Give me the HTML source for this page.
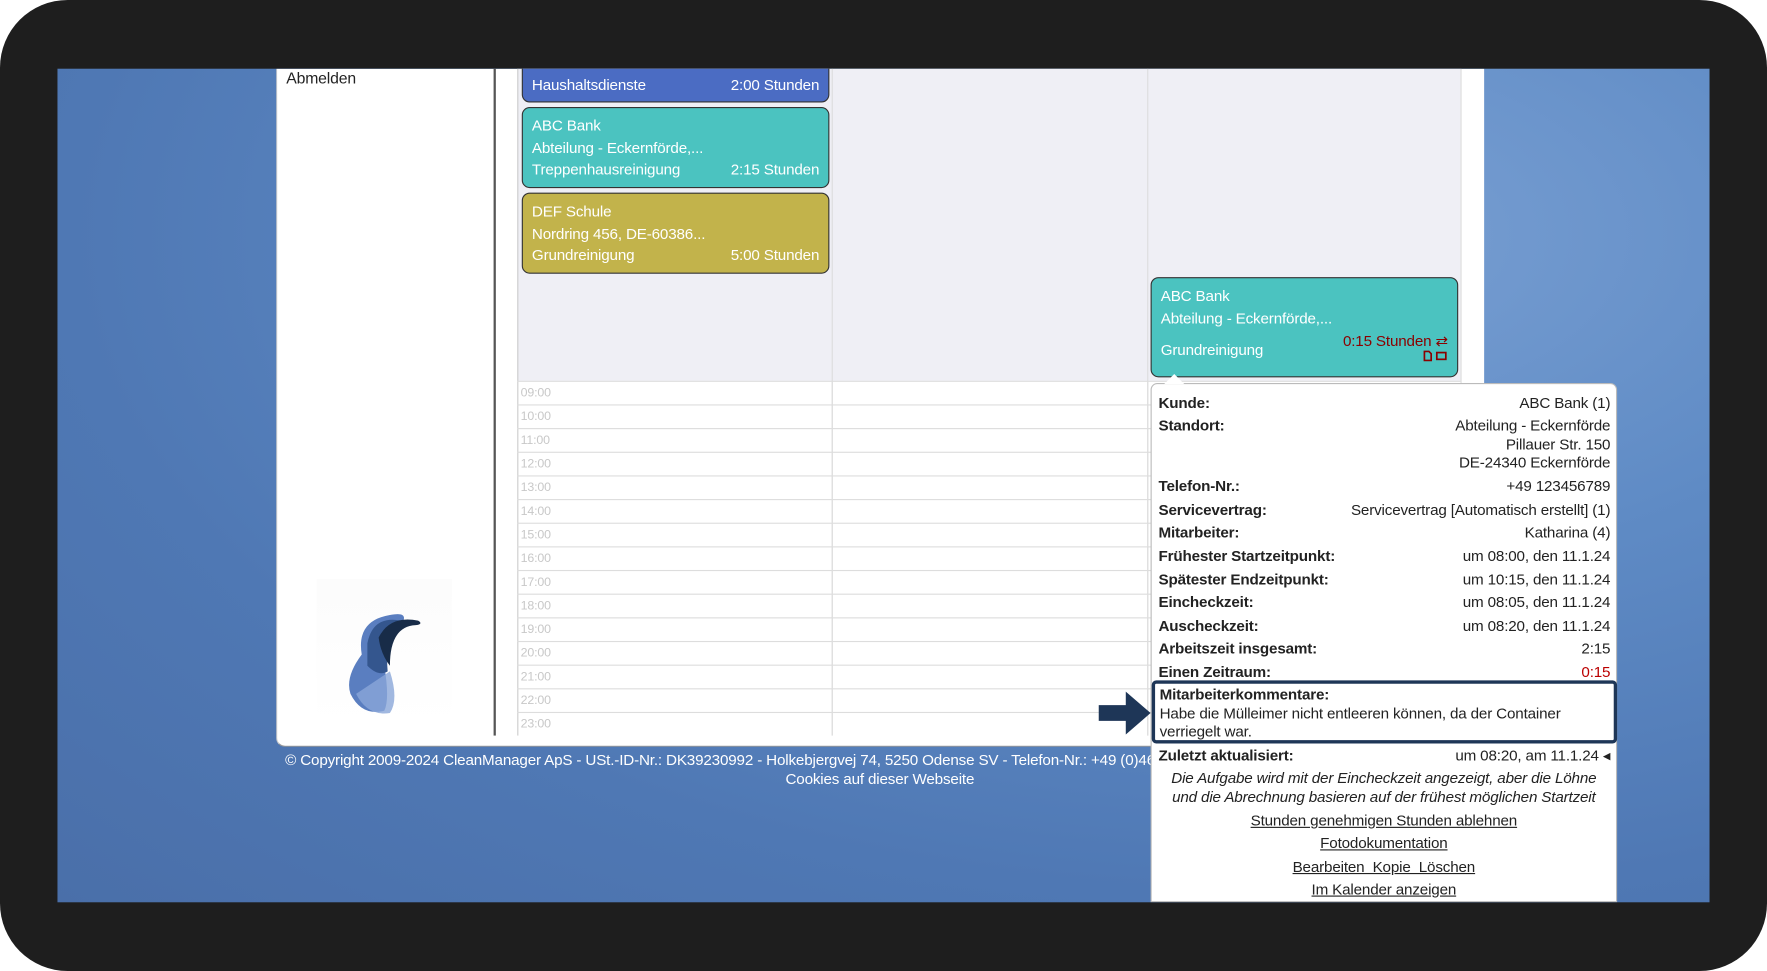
<!DOCTYPE html>
<html><head><meta charset="utf-8"><style>
*{margin:0;padding:0;box-sizing:border-box}
html,body{width:1767px;height:971px;overflow:hidden;background:#fff}
#s{position:absolute;left:0;top:0;width:1568px;height:862px;transform:scale(1.12691,1.12645);transform-origin:0 0;font-family:"Liberation Sans",sans-serif;letter-spacing:-0.15px}
.frame{position:absolute;left:0;top:0;width:1568px;height:862px;background:#1e1e1e;border-radius:60px;}
.blue{position:absolute;left:51px;top:61px;width:1466px;height:740px;background:radial-gradient(ellipse at 75% 20%,#7aa0d3 0%,#5f8bc5 35%,#4f78b4 70%,#4a6fa9 100%);overflow:hidden}
.a{position:absolute}
.panel{left:194px;top:0;width:1072px;height:602px;background:#fff;border-radius:0 0 0 8px;border-left:1px solid #ccc;border-bottom:1px solid #999}
.ev{position:absolute;border:1px solid #333;border-radius:7px;color:#fff;font-size:13.5px;padding:6px 8px;line-height:19.5px}
.ev .r{position:absolute;right:8px}
.tr{position:absolute;left:408px;width:837px;height:21px;border-top:1px solid #ddd;font-size:11px;color:#c8c8c8;padding:4px 3px}
.pop{left:970px;top:279px;width:414px;height:461px;background:#fff;border:1px solid #bbb;border-radius:6px 6px 0 0;font-size:13.5px;color:#222}
.row{position:absolute;left:6px;right:5px;height:20px}
.row b{position:absolute;left:0}
.row span{position:absolute;right:0;text-align:right}
.lk{position:absolute;left:0;width:100%;text-align:center;text-decoration:underline;color:#222}
</style></head><body><div id="s">
<div class="frame"></div>
<div class="blue">
 <div class="a panel"></div>
 <div class="a" style="left:203px;top:0;font-size:14px;color:#222">Abmelden</div>
 <div class="a" style="left:387px;top:0;width:2px;height:592px;background:#555"></div>
 <div class="a" style="left:408px;top:0;width:837px;height:277px;background:#efeff5"></div>
 <div class="a" style="left:408px;top:0;width:1px;height:592px;background:#ccc"></div>
 <div class="a" style="left:687px;top:0;width:1px;height:592px;background:#ddd"></div>
 <div class="a" style="left:967px;top:0;width:1px;height:592px;background:#ddd"></div>
 <div class="a" style="left:1245px;top:0;width:1px;height:592px;background:#ddd"></div>
 <div class="tr" style="top:277px">09:00</div><div class="tr" style="top:298px">10:00</div><div class="tr" style="top:319px">11:00</div><div class="tr" style="top:340px">12:00</div><div class="tr" style="top:361px">13:00</div><div class="tr" style="top:382px">14:00</div><div class="tr" style="top:403px">15:00</div><div class="tr" style="top:424px">16:00</div><div class="tr" style="top:445px">17:00</div><div class="tr" style="top:466px">18:00</div><div class="tr" style="top:487px">19:00</div><div class="tr" style="top:508px">20:00</div><div class="tr" style="top:529px">21:00</div><div class="tr" style="top:550px">22:00</div><div class="tr" style="top:571px">23:00</div>
 <div class="a" style="left:687px;top:277px;width:1px;height:315px;background:#ddd"></div>
 <div class="a" style="left:967px;top:277px;width:1px;height:315px;background:#ddd"></div>
 <div class="ev" style="left:412px;top:-12px;width:273px;height:42px;background:#4b6cc3;padding-top:16px">Haushaltsdienste<span class="r">2:00 Stunden</span></div>
 <div class="ev" style="left:412px;top:34px;width:273px;height:72px;background:#4bc3c0">ABC Bank<br>Abteilung - Eckernförde,...<br>Treppenhausreinigung<span class="r">2:15 Stunden</span></div>
 <div class="ev" style="left:412px;top:110px;width:273px;height:72px;background:#c2b34b">DEF Schule<br>Nordring 456, DE-60386...<br>Grundreinigung<span class="r">5:00 Stunden</span></div>
 <div class="ev" style="left:970px;top:185px;width:273px;height:89px;background:#4bc3c0">ABC Bank<br>Abteilung - Eckernförde,...<br><span style="position:absolute;left:8px;top:54px">Grundreinigung</span><span class="r" style="top:46px;color:#8b0000">0:15 Stunden ⇄</span>
  <svg class="a" style="right:8px;top:64px" width="22" height="10" viewBox="0 0 22 10"><path d="M1 1H5L7 3V9H1Z" fill="none" stroke="#8b0000" stroke-width="1.5"/><rect x="12" y="2" width="8" height="6" fill="none" stroke="#8b0000" stroke-width="1.5"/></svg></div>
 <div class="a" style="left:230px;top:453px;width:120px;height:132px;background:linear-gradient(#fcfcfc,#fff)"></div>
 <div class="a" style="left:235px;top:460px;width:120px;height:130px">
  <svg width="120" height="130" viewBox="0 0 120 130"><path d="M35 60 Q30 30 60 25 Q75 22 72 30 Q50 35 55 70 Q60 100 55 110 Q35 115 25 95 Q20 80 35 60Z" fill="#5a7ec0"/><path d="M40 50 Q45 25 70 30 Q55 40 58 75 Q50 80 40 70Z" fill="#34568e"/><path d="M50 45 Q60 25 85 30 Q90 33 83 34 Q60 35 60 70 Q52 60 50 45Z" fill="#182c48"/><path d="M30 95 Q45 85 60 75 Q68 100 60 112 Q40 115 30 95Z" fill="#8aa6d8" opacity=".8"/></svg>
 </div>
 <div class="a" style="left:0;top:605px;width:1458px;color:#fff;font-size:13.5px;line-height:17px;letter-spacing:-0.15px"><div style="position:absolute;left:202px;white-space:nowrap">© Copyright 2009-2024 CleanManager ApS - USt.-ID-Nr.: DK39230992 - Holkebjergvej 74, 5250 Odense SV - Telefon-Nr.: +49 (0)4621 123456</div><div style="position:absolute;left:646px;top:17px">Cookies auf dieser Webseite</div></div>
 <div class="a pop">
  <div class="row" style="top:9px"><b>Kunde:</b><span>ABC Bank (1)</span></div>
  <div class="row" style="top:29px;height:60px"><b>Standort:</b><span style="line-height:16.5px">Abteilung - Eckernförde<br>Pillauer Str. 150<br>DE-24340 Eckernförde</span></div>
  <div class="row" style="top:83px"><b>Telefon-Nr.:</b><span>+49 123456789</span></div>
  <div class="row" style="top:104px"><b>Servicevertrag:</b><span>Servicevertrag [Automatisch erstellt] (1)</span></div>
  <div class="row" style="top:124px"><b>Mitarbeiter:</b><span>Katharina (4)</span></div>
  <div class="row" style="top:145px"><b>Frühester Startzeitpunkt:</b><span>um 08:00, den 11.1.24</span></div>
  <div class="row" style="top:166px"><b>Spätester Endzeitpunkt:</b><span>um 10:15, den 11.1.24</span></div>
  <div class="row" style="top:186px"><b>Eincheckzeit:</b><span>um 08:05, den 11.1.24</span></div>
  <div class="row" style="top:207px"><b>Auscheckzeit:</b><span>um 08:20, den 11.1.24</span></div>
  <div class="row" style="top:227px"><b>Arbeitszeit insgesamt:</b><span>2:15</span></div>
  <div class="row" style="top:248px"><b>Einen Zeitraum:</b><span style="color:#b00">0:15</span></div>
  <div class="a" style="left:0;top:263px;width:413px;height:56px;border:3px solid #1e3657;border-radius:4px;padding:2px 4px;line-height:16.5px;font-size:13.5px"><b>Mitarbeiterkommentare:</b><br>Habe die Mülleimer nicht entleeren können, da der Container verriegelt war.</div>
  <div class="row" style="top:322px"><b>Zuletzt aktualisiert:</b><span>um 08:20, am 11.1.24 ◂</span></div>
  <div class="a" style="left:0;top:341px;width:100%;text-align:center;font-style:italic;line-height:17px">Die Aufgabe wird mit der Eincheckzeit angezeigt, aber die Löhne<br>und die Abrechnung basieren auf der frühest möglichen Startzeit</div>
  <div class="lk" style="top:380px">Stunden genehmigen Stunden ablehnen</div>
  <div class="lk" style="top:400px">Fotodokumentation</div>
  <div class="lk" style="top:421px">Bearbeiten&nbsp; Kopie&nbsp; Löschen</div>
  <div class="lk" style="top:441px">Im Kalender anzeigen</div>
 </div>
 <svg class="a" style="left:922px;top:550px" width="52" height="44" viewBox="0 0 52 44"><path d="M2 15 H26 V3 L48 22 L26 41 V29 H2Z" fill="#1e3657"/></svg>
 <div class="a" style="left:982px;top:271px;width:0;height:0;border-left:9px solid transparent;border-right:9px solid transparent;border-bottom:9px solid #fff"></div>
</div>
</div></body></html>
